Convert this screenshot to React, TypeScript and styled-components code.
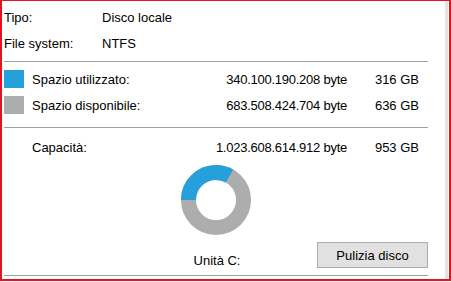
import React from 'react';
import styled, { createGlobalStyle } from 'styled-components';

const GlobalStyle = createGlobalStyle`
  html, body {
    margin: 0;
    padding: 0;
    background: #ffffff;
  }
  body {
    font-family: "Liberation Sans", Arial, sans-serif;
    font-size: 13px;
    color: #000000;
  }
`;

const Frame = styled.div`
  width: 451px;
  height: 281px;
  box-sizing: border-box;
  border-top: 1px solid #e81123;
  border-left: 2px solid #e81123;
  border-right: 2px solid #e81123;
  border-bottom: 2px solid #e81123;
  display: flex;
  background: #ffffff;
`;

const Panel = styled.div`
  flex: 1;
  padding: 3px 17px 0 2px;
  display: flex;
  flex-direction: column;
`;

const EdgeStrip = styled.div`
  width: 3px;
  margin-right: 1px;
  background: #e3e3e3;
`;

const InfoRow = styled.div`
  height: 26px;
  display: grid;
  grid-template-columns: 98px 1fr;
  align-items: center;
`;

const Separator = styled.div<{ $top: number; $bottom: number }>`
  height: 1px;
  background: #a0a0a0;
  margin-top: ${({ $top }) => $top}px;
  margin-bottom: ${({ $bottom }) => $bottom}px;
`;

const SpaceRow = styled.div`
  height: 26px;
  display: grid;
  grid-template-columns: 28px 1fr 150px 72px;
  padding-right: 9px;
  align-items: center;
`;

const Swatch = styled.div<{ $color: string }>`
  width: 20px;
  height: 18px;
  background: ${({ $color }) => $color};
`;

const Bytes = styled.span`
  text-align: right;
  letter-spacing: -0.25px;
`;

const Gb = styled.span`
  text-align: right;
`;

const ChartWrap = styled.div`
  display: flex;
  justify-content: center;
  margin-top: 5px;
  height: 70px;
`;

const BottomRow = styled.div`
  margin-top: 7px;
  height: 26px;
  display: grid;
  grid-template-columns: 1fr auto 1fr;
  align-items: end;
`;

const DriveLabel = styled.span`
  grid-column: 2;
  line-height: 14px;
  padding-left: 2px;
`;

const Button = styled.button`
  grid-column: 3;
  justify-self: end;
  width: 111px;
  height: 26px;
  background: #e1e1e1;
  border: 1px solid #adadad;
  font-family: inherit;
  font-size: 13px;
  color: #000000;
  padding: 0;
  cursor: pointer;
`;

const USED = '#26a0da';
const FREE = '#adadad';

const Donut = ({ used, total }: { used: number; total: number }) => {
  const r = 27.5;
  const c = 2 * Math.PI * r;
  const frac = used / total;
  return (
    <svg width="70" height="70" viewBox="0 0 70 70">
      <circle cx="35" cy="35" r={r} fill="none" stroke={FREE} strokeWidth="15" />
      <circle
        cx="35"
        cy="35"
        r={r}
        fill="none"
        stroke={USED}
        strokeWidth="15"
        strokeDasharray={`${c * frac} ${c}`}
        transform="rotate(180 35 35)"
      />
    </svg>
  );
};

export default function App() {
  return (
    <>
      <GlobalStyle />
      <Frame>
        <Panel>
          <InfoRow>
            <span>Tipo:</span>
            <span>Disco locale</span>
          </InfoRow>
          <InfoRow>
            <span>File system:</span>
            <span>NTFS</span>
          </InfoRow>
          <Separator $top={5} $bottom={4} />
          <SpaceRow>
            <Swatch $color={USED} />
            <span>Spazio utilizzato:</span>
            <Bytes>340.100.190.208 byte</Bytes>
            <Gb>316 GB</Gb>
          </SpaceRow>
          <SpaceRow>
            <Swatch $color={FREE} />
            <span>Spazio disponibile:</span>
            <Bytes>683.508.424.704 byte</Bytes>
            <Gb>636 GB</Gb>
          </SpaceRow>
          <Separator $top={9} $bottom={6} />
          <SpaceRow>
            <span />
            <span>Capacità:</span>
            <Bytes>1.023.608.614.912 byte</Bytes>
            <Gb>953 GB</Gb>
          </SpaceRow>
          <ChartWrap>
            <Donut used={316} total={953} />
          </ChartWrap>
          <BottomRow>
            <DriveLabel>Unità C:</DriveLabel>
            <Button>Pulizia disco</Button>
          </BottomRow>
          <Separator $top={7} $bottom={0} />
        </Panel>
        <EdgeStrip />
      </Frame>
    </>
  );
}
